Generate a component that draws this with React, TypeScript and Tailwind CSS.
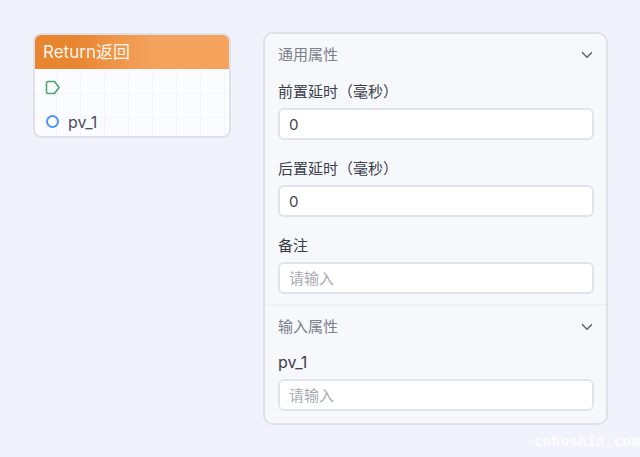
import { ChevronDown } from 'lucide-react'

const fontStack = "font-['Inter','Noto_Sans_CJK_SC',sans-serif]"

function Field({ label, value, mt }: { label: string; value?: string; mt: string }) {
  return (
    <div className={`${mt} pr-[12px] pl-[13px]`}>
      <div className="h-[19px] text-[15px] leading-[19px] text-[#3a3f4a]">{label}</div>
      <div className="mt-[7px] flex h-[32px] items-center rounded-[6px] border-2 border-[#e2e4ec] bg-white px-[10px] pt-[2px] text-[15px]">
        {value ? (
          <span className="-ml-px text-[#3f4450]">{value}</span>
        ) : (
          <span className="-ml-px text-[#a8abb4]">请输入</span>
        )}
      </div>
    </div>
  )
}

function SectionHead({ title }: { title: string }) {
  return (
    <div className="flex h-[17px] items-center justify-between pr-[10px] pl-[13px]">
      <span className="text-[15px] leading-[17px] text-[#7b7f89]">{title}</span>
      <ChevronDown size={18} strokeWidth={2.2} className="text-[#666a73]" />
    </div>
  )
}

function NodeCard() {
  return (
    <div className="h-[105px] w-[198px] shrink-0 overflow-hidden rounded-[8px] border-2 border-[#dfe1e8] bg-[#fbfcff]">
      <div className="flex h-[34px] items-center bg-gradient-to-r from-[#e8852f] from-20% to-[#f4a25c] to-60% px-[8px] pt-[2px] text-[17px] text-[#fff6ec]">
        Return返回
      </div>
      <div className="h-[67px] bg-[linear-gradient(#f4f6fc_1px,transparent_1px),linear-gradient(90deg,#f4f6fc_1px,transparent_1px)] bg-[size:24px_24px] bg-[position:21px_0] pt-[11px] pl-[10px]">
        <svg width="16" height="15" viewBox="0 0 16 15" fill="none" className="block">
          <path
            d="M3 1.5h6.5L14 7.5l-4.5 6H3a1.5 1.5 0 0 1-1.5-1.5V3A1.5 1.5 0 0 1 3 1.5z"
            stroke="#4fa36b"
            strokeWidth="1.6"
            strokeLinejoin="round"
          />
        </svg>
        <div className="mt-[17px] ml-px flex items-center">
          <span className="box-border size-[13px] rounded-full border-2 border-[#4f94f5]" />
          <span className="ml-[9px] pt-[2px] text-[16px] leading-[17px] text-[#4a4f5c]">pv_1</span>
        </div>
      </div>
    </div>
  )
}

export default function App() {
  return (
    <div className={`${fontStack} relative flex h-[457px] w-[640px] items-start gap-[32px] overflow-hidden bg-[#f0f3fb] pt-[32px] pl-[33px]`}>
      <div className="pt-px">
        <NodeCard />
      </div>
      <div className="h-[393px] w-[345px] rounded-[10px] border-2 border-[#dfe1e8] bg-[#f7f8fb] pt-[12px]">
        <SectionHead title="通用属性" />
        <Field label="前置延时（毫秒）" value="0" mt="mt-[19px]" />
        <Field label="后置延时（毫秒）" value="0" mt="mt-[19px]" />
        <Field label="备注" mt="mt-[19px]" />
        <div className="mt-[10px] h-[2px] bg-[#f0f1f5]" />
        <div className="mt-[12px]">
          <SectionHead title="输入属性" />
        </div>
        <div className="[&_div:first-child]:text-[16px]">
          <Field label="pv_1" mt="mt-[18px]" />
        </div>
      </div>
      <div className="absolute right-0 bottom-[8px] font-['DejaVu_Sans_Mono',monospace] text-[14.7px] leading-[16px] font-bold text-[#fbfcff]">
        cnhoshin.com
      </div>
    </div>
  )
}
